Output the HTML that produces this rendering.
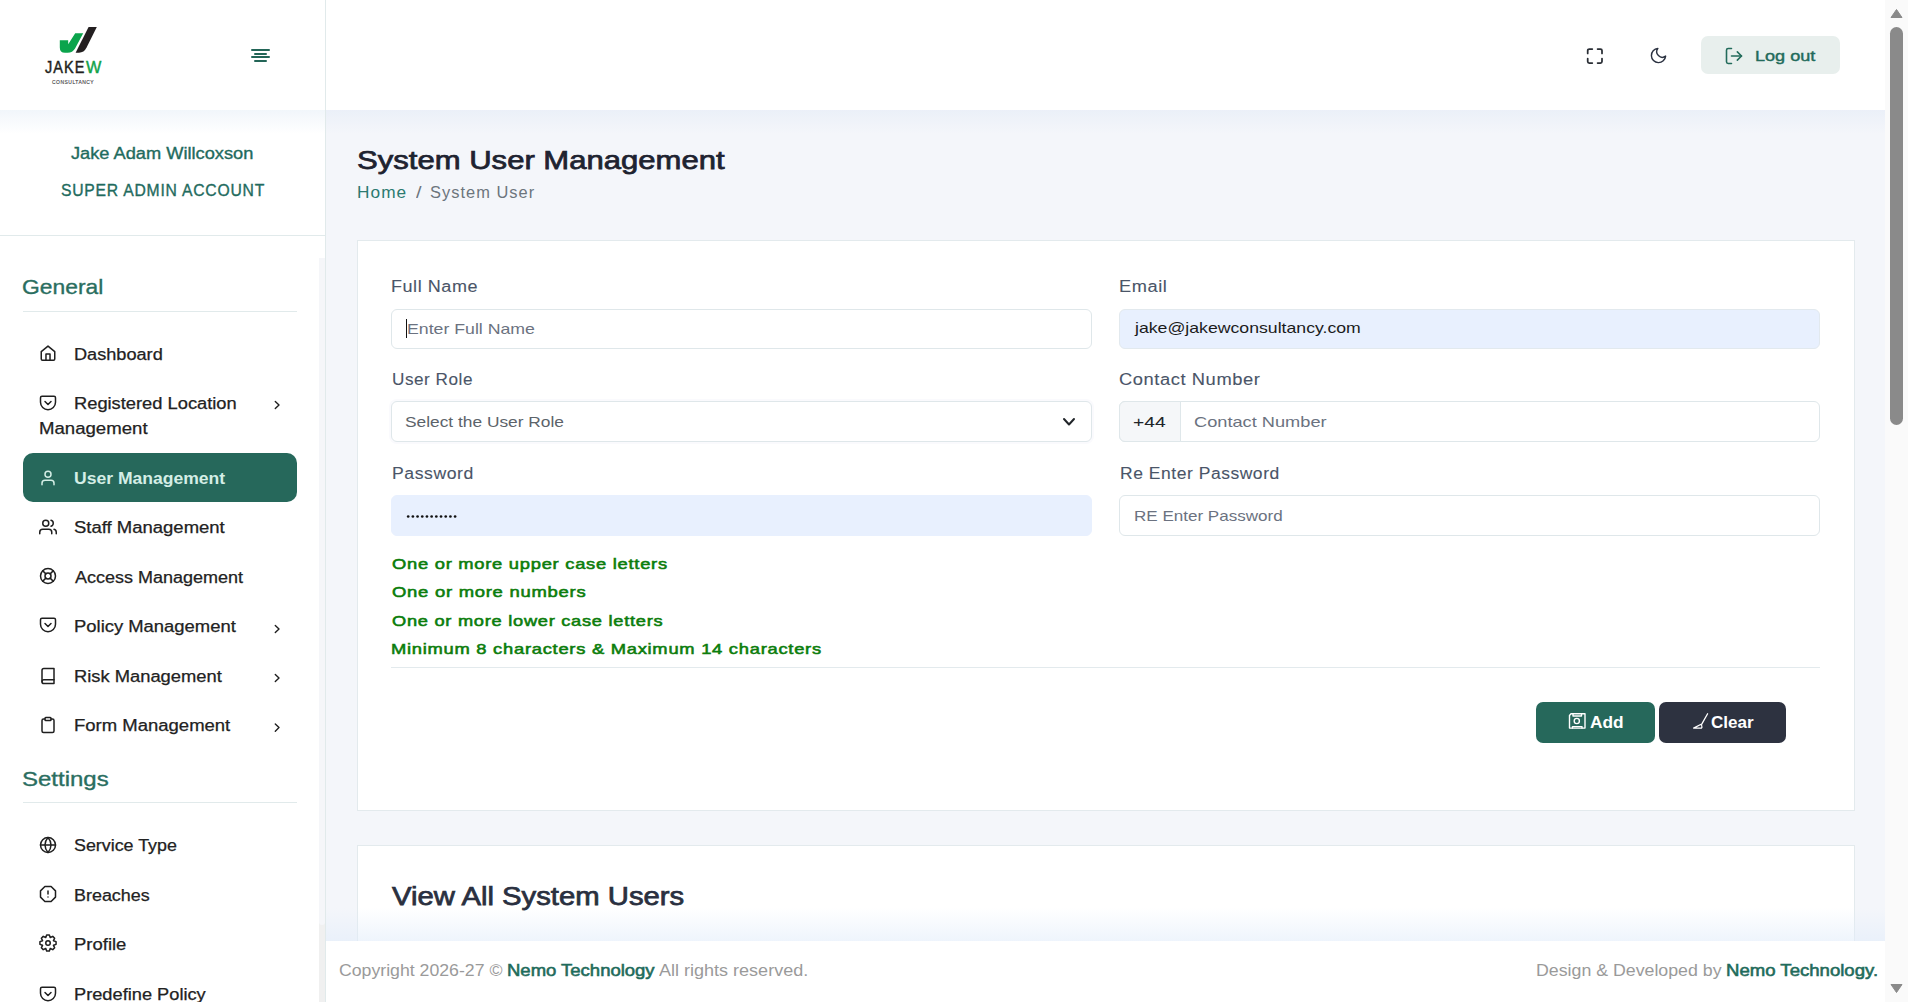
<!DOCTYPE html>
<html><head><meta charset="utf-8"><title>System User Management</title>
<style>
html,body{margin:0;padding:0;width:1908px;height:1002px;overflow:hidden;background:#f4f6fa;font-family:"Liberation Sans",sans-serif;}
.a{position:absolute;}
.t{position:absolute;white-space:pre;transform-origin:0 0;font-family:"Liberation Sans",sans-serif;}
svg.i{position:absolute;fill:none;stroke-linecap:round;stroke-linejoin:round;overflow:visible;}
</style></head><body>
<!-- main background -->
<div class="a" style="left:326px;top:110px;width:1559px;height:831px;background:#f4f6fa"></div>
<!-- header -->
<div class="a" style="left:0;top:0;width:1885px;height:110px;background:#fff"></div>
<div class="a" style="left:326px;top:110px;width:1559px;height:24px;background:linear-gradient(rgba(234,239,248,0.9),rgba(244,246,250,0))"></div>
<!-- sidebar -->
<div class="a" style="left:0;top:110px;width:325px;height:892px;background:#fff"></div>
<div class="a" style="left:0;top:110px;width:325px;height:24px;background:linear-gradient(rgba(240,245,250,0.9),rgba(255,255,255,0))"></div>
<div class="a" style="left:325px;top:0;width:1px;height:1002px;background:#e1eaeb"></div>
<div class="a" style="left:0;top:235px;width:325px;height:1px;background:#e1eaeb"></div>
<div class="a" style="left:23px;top:311px;width:274px;height:1px;background:#e1eaeb"></div>
<div class="a" style="left:23px;top:802px;width:274px;height:1px;background:#e1eaeb"></div>
<!-- sidebar scroll strip -->
<div class="a" style="left:319px;top:258px;width:6px;height:744px;background:#f0f0f0"></div>
<div class="a" style="left:319px;top:258px;width:6px;height:667px;background:#f5f6f9;border-radius:0 0 3px 3px"></div>
<!-- active menu item -->
<div class="a" style="left:23px;top:453px;width:274px;height:49px;background:#26685b;border-radius:10px"></div>

<!-- logo -->
<svg class="a" style="left:0;top:0" width="120" height="100" viewBox="0 0 120 100">
<path d="M59.8 40.3 H68.2 V44.2 L75.2 33.3 H83.2 L75.2 48.2 Q72.6 52.8 67.6 52.8 H65 Q59.8 52.8 59.8 47.5 Z" fill="#0ba44c"/>
<path d="M88.6 27 H96.8 L86.6 47.6 Q84 52.8 79 52.8 H75.6 Z" fill="#231f20"/>
</svg>
<!-- hamburger -->
<div class="a" style="left:251px;top:49px;width:19px;height:2px;background:#236557;border-radius:1px"></div>
<div class="a" style="left:254px;top:52.6px;width:13px;height:2px;background:#236557;border-radius:1px"></div>
<div class="a" style="left:251px;top:56.4px;width:19px;height:2px;background:#236557;border-radius:1px"></div>
<div class="a" style="left:254px;top:60px;width:13px;height:2px;background:#236557;border-radius:1px"></div>

<!-- sidebar icons -->
<svg class="i" style="left:39px;top:344px;stroke:#1f1f1f" width="18" height="18" viewBox="0 0 24 24" stroke-width="2"><path d="M3 10.2 L12 2.8 L21 10.2 V20 a1.6 1.6 0 0 1 -1.6 1.6 H4.6 a1.6 1.6 0 0 1 -1.6 -1.6 Z"/><path d="M9.3 21.5 V13.2 H14.7 V21.5"/></svg>
<svg class="i" style="left:39.3px;top:393.8px;stroke:#1f1f1f" width="18" height="18" viewBox="0 0 24 24" stroke-width="2"><path d="M4 3h16a2 2 0 0 1 2 2v6a10 10 0 0 1-10 10A10 10 0 0 1 2 11V5a2 2 0 0 1 2-2z"/><polyline points="8 10 12 14 16 10"/></svg>
<svg class="i" style="left:38.9px;top:469px;stroke:#d4eee6" width="18" height="18" viewBox="0 0 24 24" stroke-width="2"><path d="M20 21v-2a4 4 0 0 0-4-4H8a4 4 0 0 0-4 4v2"/><circle cx="12" cy="7" r="4"/></svg>
<svg class="i" style="left:39px;top:517.5px;stroke:#1f1f1f" width="18" height="18" viewBox="0 0 24 24" stroke-width="2"><path d="M17 21v-2a4 4 0 0 0-4-4H5a4 4 0 0 0-4 4v2"/><circle cx="9" cy="7" r="4"/><path d="M23 21v-2a4 4 0 0 0-3-3.87"/><path d="M16 3.13a4 4 0 0 1 0 7.75"/></svg>
<svg class="i" style="left:39px;top:567.4px;stroke:#1f1f1f" width="18" height="18" viewBox="0 0 24 24" stroke-width="2"><circle cx="12" cy="12" r="10"/><circle cx="12" cy="12" r="4"/><line x1="4.93" y1="4.93" x2="9.17" y2="9.17"/><line x1="14.83" y1="14.83" x2="19.07" y2="19.07"/><line x1="14.83" y1="9.17" x2="19.07" y2="4.93"/><line x1="4.93" y1="19.07" x2="9.17" y2="14.83"/></svg>
<svg class="i" style="left:39.3px;top:616.1px;stroke:#1f1f1f" width="18" height="18" viewBox="0 0 24 24" stroke-width="2"><path d="M4 3h16a2 2 0 0 1 2 2v6a10 10 0 0 1-10 10A10 10 0 0 1 2 11V5a2 2 0 0 1 2-2z"/><polyline points="8 10 12 14 16 10"/></svg>
<svg class="i" style="left:38.75px;top:666.5px;stroke:#1f1f1f" width="18" height="18" viewBox="0 0 24 24" stroke-width="2"><path d="M4 19.5A2.5 2.5 0 0 1 6.5 17H20"/><path d="M6.5 2H20v20H6.5A2.5 2.5 0 0 1 4 19.5v-15A2.5 2.5 0 0 1 6.5 2z"/></svg>
<svg class="i" style="left:38.75px;top:715.6px;stroke:#1f1f1f" width="18" height="18" viewBox="0 0 24 24" stroke-width="2"><path d="M16 4h2a2 2 0 0 1 2 2v14a2 2 0 0 1-2 2H6a2 2 0 0 1-2-2V6a2 2 0 0 1 2-2h2"/><rect x="8" y="2" width="8" height="4" rx="1" ry="1"/></svg>
<svg class="i" style="left:39px;top:835.5px;stroke:#1f1f1f" width="18" height="18" viewBox="0 0 24 24" stroke-width="2"><circle cx="12" cy="12" r="10"/><line x1="2" y1="12" x2="22" y2="12"/><path d="M12 2a15.3 15.3 0 0 1 4 10 15.3 15.3 0 0 1-4 10 15.3 15.3 0 0 1-4-10 15.3 15.3 0 0 1 4-10z"/></svg>
<svg class="i" style="left:39px;top:885.3px;stroke:#1f1f1f" width="18" height="18" viewBox="0 0 24 24" stroke-width="2"><polygon points="7.86 2 16.14 2 22 7.86 22 16.14 16.14 22 7.86 22 2 16.14 2 7.86 7.86 2"/><line x1="12" y1="8" x2="12" y2="12"/><line x1="12" y1="16" x2="12.01" y2="16"/></svg>
<svg class="i" style="left:39px;top:934px;stroke:#1f1f1f" width="18" height="18" viewBox="0 0 24 24" stroke-width="2"><path d="M9.03 4.68 L10.21 1.25 L13.79 1.25 L14.97 4.68 L15.08 4.73 L18.34 3.13 L20.87 5.66 L19.27 8.92 L19.32 9.03 L22.75 10.21 L22.75 13.79 L19.32 14.97 L19.27 15.08 L20.87 18.34 L18.34 20.87 L15.08 19.27 L14.97 19.32 L13.79 22.75 L10.21 22.75 L9.03 19.32 L8.92 19.27 L5.66 20.87 L3.13 18.34 L4.73 15.08 L4.68 14.97 L1.25 13.79 L1.25 10.21 L4.68 9.03 L4.73 8.92 L3.13 5.66 L5.66 3.13 L8.92 4.73 Z"/><circle cx="12" cy="12" r="3"/></svg>
<svg class="i" style="left:39.3px;top:984.8px;stroke:#1f1f1f" width="18" height="18" viewBox="0 0 24 24" stroke-width="2"><path d="M4 3h16a2 2 0 0 1 2 2v6a10 10 0 0 1-10 10A10 10 0 0 1 2 11V5a2 2 0 0 1 2-2z"/><polyline points="8 10 12 14 16 10"/></svg>
<!-- chevrons -->
<svg class="i" style="left:0;top:0;stroke:#1f1f1f" width="300" height="800" viewBox="0 0 300 800" stroke-width="1.4">
<polyline points="275.3 401.4 279 405 275.3 408.6"/>
<polyline points="275.3 625.4 279 629 275.3 632.6"/>
<polyline points="275.3 674.4 279 678 275.3 681.6"/>
<polyline points="275.3 724 279 727.6 275.3 731.2"/>
</svg>

<!-- header icons -->
<svg class="i" style="left:1586px;top:47px;stroke:#2a2e35" width="18" height="18" viewBox="0 0 18 18" stroke-width="1.75">
<path d="M1.7 6.4 V3.6 a1.6 1.6 0 0 1 1.6 -1.6 H6.3"/>
<path d="M11.6 2 H14.4 a1.6 1.6 0 0 1 1.6 1.6 V6.4"/>
<path d="M16 11.6 V14.4 a1.6 1.6 0 0 1 -1.6 1.6 H11.6"/>
<path d="M6.3 16 H3.3 a1.6 1.6 0 0 1 -1.6 -1.6 V11.6"/>
</svg>
<svg class="i" style="left:1648.5px;top:46.4px;stroke:#2a3140" width="19" height="19" viewBox="0 0 24 24" stroke-width="1.8"><path d="M21 12.79A9 9 0 1 1 11.21 3 7 7 0 0 0 21 12.79z"/></svg>
<!-- logout button -->
<div class="a" style="left:1701px;top:36px;width:139px;height:38px;background:#e8efed;border-radius:7px"></div>
<svg class="i" style="left:1724px;top:46px;stroke:#226b5b" width="20" height="20" viewBox="0 0 24 24" stroke-width="1.9"><path d="M9 21H5a2 2 0 0 1-2-2V5a2 2 0 0 1 2-2h4"/><polyline points="16 17 21 12 16 7"/><line x1="21" y1="12" x2="9" y2="12"/></svg>

<!-- card 1 -->
<div class="a" style="left:357px;top:240px;width:1496px;height:569px;background:#fff;border:1px solid #e3eaed"></div>
<!-- inputs -->
<div class="a" style="left:391px;top:309px;width:699px;height:38px;background:#fff;border:1px solid #dfe7ea;border-radius:6px"></div>
<div class="a" style="left:406px;top:319px;width:1.3px;height:19px;background:#111"></div>
<div class="a" style="left:1119px;top:309px;width:699px;height:38px;background:#e8f0fe;border:1px solid #e2e9ee;border-radius:6px"></div>
<div class="a" style="left:389px;top:399px;width:705px;height:45px;background:#fafafd;border-radius:8px"></div>
<div class="a" style="left:391px;top:401px;width:699px;height:39px;background:#fff;border:1px solid #dfe7ea;border-radius:6px"></div>
<svg class="i" style="left:1060px;top:414px;stroke:#212529" width="18" height="16" viewBox="0 0 18 16" stroke-width="2"><polyline points="4 5 9 10.5 14 5"/></svg>
<div class="a" style="left:1119px;top:401px;width:699px;height:39px;background:#fff;border:1px solid #dfe7ea;border-radius:6px"></div>
<div class="a" style="left:1119px;top:401px;width:60px;height:39px;background:#f5f7f9;border:1px solid #dfe7ea;border-radius:6px 0 0 6px"></div>
<div class="a" style="left:391px;top:495px;width:699px;height:39px;background:#e8f0fe;border:1px solid #e8f0fe;border-radius:6px"></div>
<div class="a" style="left:1119px;top:495px;width:699px;height:39px;background:#fff;border:1px solid #dfe7ea;border-radius:6px"></div>
<!-- password dots -->
<svg class="a" style="left:400px;top:510px" width="70" height="14" viewBox="0 0 70 14">
<g fill="#111"><circle cx="8.20" cy="6.5" r="1.35"/><circle cx="12.89" cy="6.5" r="1.35"/><circle cx="17.58" cy="6.5" r="1.35"/><circle cx="22.27" cy="6.5" r="1.35"/><circle cx="26.96" cy="6.5" r="1.35"/><circle cx="31.65" cy="6.5" r="1.35"/><circle cx="36.34" cy="6.5" r="1.35"/><circle cx="41.03" cy="6.5" r="1.35"/><circle cx="45.72" cy="6.5" r="1.35"/><circle cx="50.41" cy="6.5" r="1.35"/><circle cx="55.10" cy="6.5" r="1.35"/></g></svg>
<!-- divider -->
<div class="a" style="left:391px;top:667px;width:1429px;height:1px;background:#e3eaed"></div>
<!-- buttons -->
<div class="a" style="left:1536px;top:702px;width:119px;height:41px;background:#26685b;border-radius:7px"></div>
<div class="a" style="left:1659px;top:702px;width:127px;height:41px;background:#2d3240;border-radius:7px"></div>
<svg class="i" style="left:1568px;top:712px;stroke:#fff" width="19" height="18" viewBox="0 0 19 18" stroke-width="1.4">
<path d="M1.5 3.5 L3 1.8 H17 V16.1 H1.5 Z"/><path d="M5 1.8 V4 H13.5 V1.8"/><circle cx="8.8" cy="9" r="2.6"/><path d="M4.5 16.1 V14.6 H14 V16.1"/></svg>
<svg class="i" style="left:1690px;top:710px;stroke:#fff" width="20" height="20" viewBox="0 0 20 20" stroke-width="1.3">
<line x1="17.6" y1="3.8" x2="11.6" y2="14.4"/><path d="M3.6 18.1 L10.6 14.5 Q12.3 15.3 11.9 17.4 L11.4 18.1 Z"/></svg>

<!-- card 2 -->
<div class="a" style="left:357px;top:845px;width:1496px;height:200px;background:#fff;border:1px solid #e3eaed"></div>
<!-- footer shadow & footer -->
<div class="a" style="left:326px;top:908px;width:1559px;height:33px;background:linear-gradient(rgba(232,240,250,0),rgba(225,236,250,0.55))"></div>
<div class="a" style="left:326px;top:941px;width:1559px;height:61px;background:#fff"></div>


<!-- browser scrollbar -->
<div class="a" style="left:1885px;top:0;width:23px;height:1002px;background:#fafafa"></div>
<div class="a" style="left:1890px;top:27px;width:13px;height:398px;background:#8a8a8a;border-radius:6.5px"></div>
<svg class="a" style="left:1885px;top:0" width="23" height="1002" viewBox="0 0 23 1002">
<path d="M11.5 9.5 L17 17.5 H6 Z" fill="#8a8a8a" stroke="#8a8a8a" stroke-width="1" stroke-linejoin="round"/>
<path d="M11.5 992.5 L17 984.5 H6 Z" fill="#8a8a8a" stroke="#8a8a8a" stroke-width="1" stroke-linejoin="round"/>
</svg>

<div class="t" style="left:71.10px;top:146px;font-weight:400;font-size:16px;line-height:16px;color:#1f6b5e;transform:scaleX(1.1388);-webkit-text-stroke:0.35px #1f6b5e;">Jake Adam Willcoxson</div>
<div class="t" style="left:60.72px;top:183px;font-weight:400;font-size:16px;line-height:16px;color:#1f6b5e;transform:scaleX(0.9806);-webkit-text-stroke:0.35px #1f6b5e;letter-spacing:0.8px;">SUPER ADMIN ACCOUNT</div>
<div class="t" style="left:21.81px;top:276px;font-weight:400;font-size:21px;line-height:21px;color:#2a6e60;transform:scaleX(1.0877);-webkit-text-stroke:0.35px #2a6e60;">General</div>
<div class="t" style="left:74.37px;top:347px;font-weight:400;font-size:16px;line-height:16px;color:#222222;transform:scaleX(1.1338);-webkit-text-stroke:0.25px #222222;">Dashboard</div>
<div class="t" style="left:74.36px;top:396px;font-weight:400;font-size:16px;line-height:16px;color:#222222;transform:scaleX(1.1433);-webkit-text-stroke:0.25px #222222;">Registered Location</div>
<div class="t" style="left:39.34px;top:421px;font-weight:400;font-size:16px;line-height:16px;color:#222222;transform:scaleX(1.1624);-webkit-text-stroke:0.25px #222222;">Management</div>
<div class="t" style="left:73.60px;top:471px;font-weight:700;font-size:16px;line-height:16px;color:#d4eee6;transform:scaleX(1.0964);">User Management</div>
<div class="t" style="left:73.54px;top:520px;font-weight:400;font-size:16px;line-height:16px;color:#222222;transform:scaleX(1.1554);-webkit-text-stroke:0.25px #222222;">Staff Management</div>
<div class="t" style="left:74.70px;top:570px;font-weight:400;font-size:16px;line-height:16px;color:#222222;transform:scaleX(1.1240);-webkit-text-stroke:0.25px #222222;">Access Management</div>
<div class="t" style="left:74.35px;top:619px;font-weight:400;font-size:16px;line-height:16px;color:#222222;transform:scaleX(1.1514);-webkit-text-stroke:0.25px #222222;">Policy Management</div>
<div class="t" style="left:74.35px;top:669px;font-weight:400;font-size:16px;line-height:16px;color:#222222;transform:scaleX(1.1461);-webkit-text-stroke:0.25px #222222;">Risk Management</div>
<div class="t" style="left:74.34px;top:718px;font-weight:400;font-size:16px;line-height:16px;color:#222222;transform:scaleX(1.1560);-webkit-text-stroke:0.25px #222222;">Form Management</div>
<div class="t" style="left:21.76px;top:768px;font-weight:400;font-size:21px;line-height:21px;color:#2a6e60;transform:scaleX(1.1427);-webkit-text-stroke:0.35px #2a6e60;">Settings</div>
<div class="t" style="left:73.58px;top:838px;font-weight:400;font-size:16px;line-height:16px;color:#222222;transform:scaleX(1.1154);-webkit-text-stroke:0.25px #222222;">Service Type</div>
<div class="t" style="left:74.38px;top:888px;font-weight:400;font-size:16px;line-height:16px;color:#222222;transform:scaleX(1.1197);-webkit-text-stroke:0.25px #222222;">Breaches</div>
<div class="t" style="left:74.35px;top:937px;font-weight:400;font-size:16px;line-height:16px;color:#222222;transform:scaleX(1.1545);-webkit-text-stroke:0.25px #222222;">Profile</div>
<div class="t" style="left:74.36px;top:987px;font-weight:400;font-size:16px;line-height:16px;color:#222222;transform:scaleX(1.1391);-webkit-text-stroke:0.25px #222222;">Predefine Policy</div>
<div class="t" style="left:1755.49px;top:48px;font-weight:400;font-size:15px;line-height:15px;color:#226b5b;transform:scaleX(1.2060);-webkit-text-stroke:0.4px #226b5b;">Log out</div>
<div class="t" style="left:356.61px;top:147px;font-weight:400;font-size:26px;line-height:26px;color:#1e2330;transform:scaleX(1.1945);-webkit-text-stroke:0.75px #1e2330;">System User Management</div>
<div class="t" style="left:356.72px;top:185px;font-weight:400;font-size:16px;line-height:16px;color:#2b7a70;transform:scaleX(1.0773);letter-spacing:1px;">Home</div>
<div class="t" style="left:415.80px;top:185px;font-weight:400;font-size:16px;line-height:16px;color:#6c757d;transform:scaleX(1.2400);">/</div>
<div class="t" style="left:430.37px;top:185px;font-weight:400;font-size:16px;line-height:16px;color:#6c757d;transform:scaleX(1.0257);letter-spacing:1px;">System User</div>
<div class="t" style="left:391.48px;top:279px;font-weight:400;font-size:16px;line-height:16px;color:#4a5568;transform:scaleX(1.1237);-webkit-text-stroke:0.1px #4a5568;letter-spacing:0.5px;">Full Name</div>
<div class="t" style="left:1119.46px;top:279px;font-weight:400;font-size:16px;line-height:16px;color:#4a5568;transform:scaleX(1.1375);-webkit-text-stroke:0.1px #4a5568;letter-spacing:0.5px;">Email</div>
<div class="t" style="left:391.53px;top:372px;font-weight:400;font-size:16px;line-height:16px;color:#4a5568;transform:scaleX(1.0703);-webkit-text-stroke:0.1px #4a5568;letter-spacing:0.5px;">User Role</div>
<div class="t" style="left:1118.85px;top:372px;font-weight:400;font-size:16px;line-height:16px;color:#4a5568;transform:scaleX(1.1451);-webkit-text-stroke:0.1px #4a5568;letter-spacing:0.5px;">Contact Number</div>
<div class="t" style="left:391.60px;top:466px;font-weight:400;font-size:16px;line-height:16px;color:#4a5568;transform:scaleX(1.1014);-webkit-text-stroke:0.1px #4a5568;letter-spacing:0.5px;">Password</div>
<div class="t" style="left:1119.61px;top:466px;font-weight:400;font-size:16px;line-height:16px;color:#4a5568;transform:scaleX(1.0917);-webkit-text-stroke:0.1px #4a5568;letter-spacing:0.5px;">Re Enter Password</div>
<div class="t" style="left:406.62px;top:321px;font-weight:400;font-size:15px;line-height:15px;color:#6b7280;transform:scaleX(1.1804);">Enter Full Name</div>
<div class="t" style="left:1135.48px;top:320px;font-weight:400;font-size:15px;line-height:15px;color:#1b1b1b;transform:scaleX(1.1781);">jake@jakewconsultancy.com</div>
<div class="t" style="left:405.24px;top:414px;font-weight:400;font-size:15px;line-height:15px;color:#5c636a;transform:scaleX(1.1559);">Select the User Role</div>
<div class="t" style="left:1133.22px;top:414px;font-weight:400;font-size:15px;line-height:15px;color:#212529;transform:scaleX(1.2833);">+44</div>
<div class="t" style="left:1194.09px;top:414px;font-weight:400;font-size:15px;line-height:15px;color:#6b7280;transform:scaleX(1.2139);">Contact Number</div>
<div class="t" style="left:1134.06px;top:508px;font-weight:400;font-size:15px;line-height:15px;color:#6b7280;transform:scaleX(1.1357);">RE Enter Password</div>
<div class="t" style="left:392.10px;top:556px;font-weight:400;font-size:15px;line-height:15px;color:#0b7d0b;transform:scaleX(1.2227);-webkit-text-stroke:0.55px #0b7d0b;letter-spacing:0.6px;">One or more upper case letters</div>
<div class="t" style="left:392.10px;top:584px;font-weight:400;font-size:15px;line-height:15px;color:#0b7d0b;transform:scaleX(1.2291);-webkit-text-stroke:0.55px #0b7d0b;letter-spacing:0.6px;">One or more numbers</div>
<div class="t" style="left:392.10px;top:613px;font-weight:400;font-size:15px;line-height:15px;color:#0b7d0b;transform:scaleX(1.2161);-webkit-text-stroke:0.55px #0b7d0b;letter-spacing:0.6px;">One or more lower case letters</div>
<div class="t" style="left:390.88px;top:641px;font-weight:400;font-size:15px;line-height:15px;color:#0b7d0b;transform:scaleX(1.2228);-webkit-text-stroke:0.55px #0b7d0b;letter-spacing:0.6px;">Minimum 8 characters & Maximum 14 characters</div>
<div class="t" style="left:1589.60px;top:715px;font-weight:700;font-size:16px;line-height:16px;color:#ffffff;transform:scaleX(1.0800);">Add</div>
<div class="t" style="left:1710.94px;top:715px;font-weight:700;font-size:16px;line-height:16px;color:#ffffff;transform:scaleX(1.0641);">Clear</div>
<div class="t" style="left:391.70px;top:883px;font-weight:400;font-size:26px;line-height:26px;color:#2a3040;transform:scaleX(1.1255);-webkit-text-stroke:0.75px #2a3040;">View All System Users</div>
<div class="t" style="left:339.39px;top:963px;font-weight:400;font-size:16px;line-height:16px;color:#9a9a9a;transform:scaleX(1.1054);">Copyright 2026-27 ©</div>
<div class="t" style="left:506.54px;top:963px;font-weight:400;font-size:16px;line-height:16px;color:#1f6b5b;transform:scaleX(1.1551);-webkit-text-stroke:0.55px #1f6b5b;">Nemo Technology</div>
<div class="t" style="left:658.90px;top:963px;font-weight:400;font-size:16px;line-height:16px;color:#9a9a9a;transform:scaleX(1.1260);">All rights reserved.</div>
<div class="t" style="left:1536.39px;top:963px;font-weight:400;font-size:16px;line-height:16px;color:#9a9a9a;transform:scaleX(1.1096);">Design &amp; Developed by</div>
<div class="t" style="left:1725.94px;top:963px;font-weight:400;font-size:16px;line-height:16px;color:#1f6b5b;transform:scaleX(1.1605);-webkit-text-stroke:0.55px #1f6b5b;">Nemo Technology.</div>
<div class="t" style="left:45.10px;top:59px;font-weight:400;font-size:17px;line-height:17px;color:#231f20;transform:scaleX(0.8522);-webkit-text-stroke:0.45px #231f20;letter-spacing:1.2px;">JAKE</div>
<div class="t" style="left:85.70px;top:59px;font-weight:400;font-size:17px;line-height:17px;color:#12a34a;transform:scaleX(0.9562);-webkit-text-stroke:0.45px #12a34a;">W</div>
<div class="t" style="left:52.00px;top:79px;font-weight:400;font-size:6px;line-height:6px;color:#444444;transform:scaleX(0.8260);-webkit-text-stroke:0.15px #444444;letter-spacing:0.6px;">CONSULTANCY</div>
</body></html>
